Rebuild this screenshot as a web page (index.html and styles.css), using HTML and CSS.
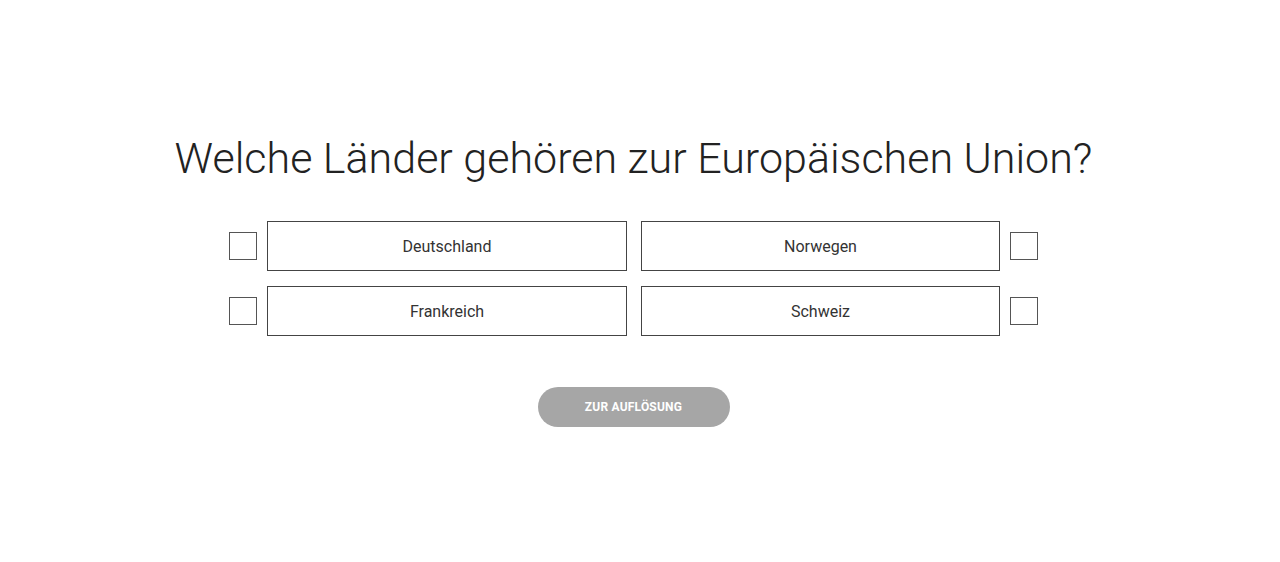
FILE: index.html
```html
<!DOCTYPE html>
<html lang="de">
<head>
    <meta charset="UTF-8">
    <meta name="viewport" content="width=device-width, initial-scale=1.0">
    <title>Quiz - Europäische Union</title>
    <link rel="stylesheet" href="styles.css">
</head>
<body>
    <div class="quiz">
        <h1 class="question">Welche Länder gehören zur Europäischen Union?</h1>
        <div class="answers">
            <label class="answer">
                <span class="check"></span>
                <span class="answer-box">Deutschland</span>
            </label>
            <label class="answer answer-right">
                <span class="answer-box">Norwegen</span>
                <span class="check"></span>
            </label>
            <label class="answer">
                <span class="check"></span>
                <span class="answer-box">Frankreich</span>
            </label>
            <label class="answer answer-right">
                <span class="answer-box">Schweiz</span>
                <span class="check"></span>
            </label>
        </div>
        <button class="solve-btn" disabled>Zur Auflösung</button>
    </div>
</body>
</html>
```

FILE: styles.css
```css
body {
    margin: 0;
    padding: 0;
    background-color: #fff;
    font-family: Roboto, "Liberation Sans", sans-serif;
    color: #222;
}
.quiz {
    width: 1267px;
    display: flex;
    flex-direction: column;
    align-items: center;
    padding-top: 133px;
}
.question {
    margin: 0;
    font-size: 43px;
    font-weight: 300;
    line-height: 50px;
    color: #222;
}
.answers {
    display: grid;
    grid-template-columns: 398px 397px;
    column-gap: 14px;
    row-gap: 15px;
    margin-top: 38px;
}
.answer {
    display: flex;
    align-items: center;
    gap: 10px;
    cursor: pointer;
}
.check {
    width: 26px;
    height: 26px;
    border: 1px solid #555;
    flex-shrink: 0;
}
.answer-box {
    flex: 1;
    height: 48px;
    border: 1px solid #444;
    display: flex;
    align-items: center;
    justify-content: center;
    font-size: 16px;
    color: #333;
}
.solve-btn {
    margin-top: 51px;
    width: 192px;
    height: 40px;
    border: none;
    border-radius: 20px;
    background-color: #a6a6a6;
    color: #fff;
    font-family: Roboto, "Liberation Sans", sans-serif;
    font-size: 12px;
    font-weight: 700;
    text-transform: uppercase;
    letter-spacing: 0.2px;
}
```
